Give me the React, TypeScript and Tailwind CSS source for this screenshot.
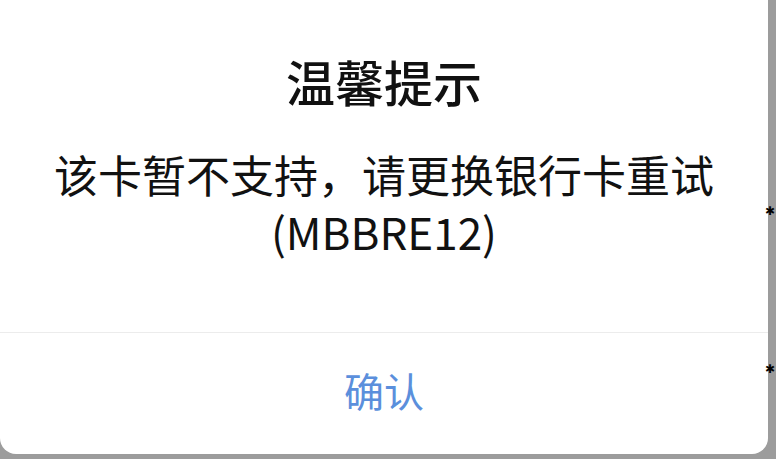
import React from "react";

export default function App() {
  return (
    <div
      className="relative w-[776px] h-[459px] overflow-hidden bg-[#9c9c9c]"
      style={{ fontFamily: '"Noto Sans CJK SC", "Noto Sans", sans-serif' }}
    >
      <div className="w-[768px] h-[454px] bg-white rounded-b-[16px] flex flex-col">
        <div className="h-[332px] flex flex-col items-center">
          <div className="mt-[53px] text-[49px] leading-[56px] font-medium text-[#111]">
            温馨提示
          </div>
          <div className="mt-[37px] text-[44px] leading-[57px] text-[#111] text-center">
            <div>该卡暂不支持，请更换银行卡重试</div>
            <div>(MBBRE12)</div>
          </div>
        </div>
        <div className="h-px bg-[#ececec]" />
        <div className="flex-1 flex items-center justify-center pb-[8px]">
          <span className="text-[40px] leading-[48px] text-[#5b8fdc]">确认</span>
        </div>
      </div>
      <span className="absolute left-[765px] top-[205px] text-[12px] font-bold leading-none text-black" style={{ fontFamily: '"DejaVu Sans", sans-serif' }}>✱</span>
      <span className="absolute left-[765px] top-[363px] text-[12px] font-bold leading-none text-black" style={{ fontFamily: '"DejaVu Sans", sans-serif' }}>✱</span>
    </div>
  );
}
